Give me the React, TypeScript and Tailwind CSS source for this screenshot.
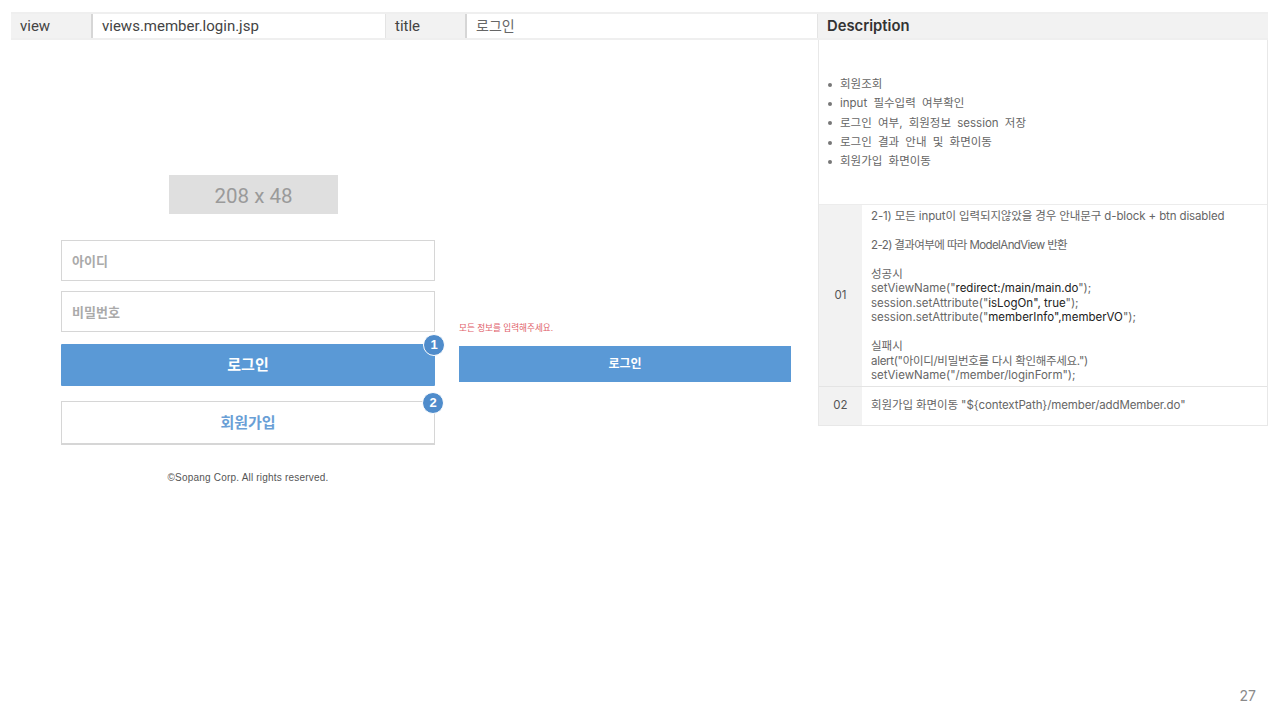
import type { ReactNode } from "react";

const FONT = "font-['Inter','Noto_Sans_CJK_KR',sans-serif]";

function Badge({ n }: { n: number }) {
  return (
    <span className="absolute -right-[10px] -top-[10px] flex h-[22px] w-[22px] items-center justify-center rounded-full border border-white bg-[#4f8ccb] text-[13px] font-bold text-white">
      {n}
    </span>
  );
}

function MetaCell({ label, value, labelW, valueW }: { label: string; value: ReactNode; labelW: string; valueW: string }) {
  return (
    <>
      <div className={`flex h-full items-center border-r-2 border-[#d6d6d6] bg-[#f2f2f2] pl-[9px] font-['Roboto','Noto_Sans_CJK_KR',sans-serif] text-[15px] text-[#444] ${labelW}`}>
        {label}
      </div>
      <div className={`flex h-full items-center border-r border-[#e4e4e4] pl-[9px] font-['Roboto','Noto_Sans_CJK_KR',sans-serif] text-[15px] text-[#444] ${valueW}`}>
        {value}
      </div>
    </>
  );
}

export default function App() {
  return (
    <div className={`${FONT} relative flex h-[720px] w-[1280px] items-start overflow-hidden bg-white pl-[11px] pt-[12px]`}>
      {/* left: meta row + screens */}
      <div className="w-[807px]">
        <div className="flex h-[28px] items-center border-y-2 border-[#efefef]">
          <MetaCell label="view" value="views.member.login.jsp" labelW="w-[82px]" valueW="w-[293px]" />
          <MetaCell label="title" value={<span className="text-[14px] text-[#666]">로그인</span>} labelW="w-[81px]" valueW="w-[351px]" />
        </div>

        <div className="flex pl-[50px]">
          {/* login form */}
          <div className="w-[374px] pt-[135px] font-['Liberation_Sans','Noto_Sans_CJK_KR',sans-serif]">
            <div className="ml-[108px] flex h-[39px] w-[169px] items-center justify-center bg-[#dfdfdf] pt-[3px] font-['Roboto',sans-serif] text-[20.5px] text-[#9a9a9a]">
              208 x 48
            </div>
            <div className="mt-[26px] flex h-[41px] items-center border border-[#d6d6d6] pl-[10px] pt-[3px] text-[13px] font-bold text-[#aaa]">
              아이디
            </div>
            <div className="mt-[10px] flex h-[41px] items-center border border-[#d6d6d6] pl-[10px] pt-[3px] text-[13px] font-bold text-[#aaa]">
              비밀번호
            </div>
            <div className="relative mt-[12px] flex h-[42px] items-center justify-center rounded-[1px] bg-[#5a99d6] text-[15px] font-bold text-white">
              로그인
              <Badge n={1} />
            </div>
            <div className="relative mt-[15px] flex h-[44px] items-center justify-center border border-b-2 border-[#d6d6d6] pt-[2px] text-[15px] font-bold text-[#6a9fd6]">
              회원가입
              <Badge n={2} />
            </div>
            <p className="mt-[27px] text-center text-[10px] leading-[12px] tracking-[0.2px] text-[#555]">
              ©Sopang Corp. All rights reserved.
            </p>
          </div>

          {/* error state */}
          <div className="ml-[24px] w-[332px] pt-[283px] font-['Liberation_Sans','Noto_Sans_CJK_KR',sans-serif]">
            <p className="text-[8.6px] leading-[10px] text-[#e0606a]">모든 정보를 입력해주세요.</p>
            <div className="mt-[13px] flex h-[36px] items-center justify-center bg-[#5a99d6] text-[12px] font-bold text-white">
              로그인
            </div>
          </div>
        </div>
      </div>

      {/* right: description */}
      <div className="w-[450px]">
        <div className="flex h-[28px] items-center border-y-2 border-[#efefef] bg-[#f2f2f2] pl-[9px] text-[14.8px] font-semibold text-[#333]">
          Description
        </div>
        <div className="border-x border-b border-[#e8e8e8]">
          <ul className="h-[165px] border-b border-[#ececec] pl-[9px] pt-[35px] text-[11.5px] leading-[19.3px] text-[#666] [word-spacing:3px]">
            {[
              "회원조회",
              "input 필수입력 여부확인",
              "로그인 여부, 회원정보 session 저장",
              "로그인 결과 안내 및 화면이동",
              "회원가입 화면이동",
            ].map((item) => (
              <li key={item} className="flex items-center gap-[8px]">
                <span className="h-[4px] w-[4px] rounded-full bg-[#777]" />
                {item}
              </li>
            ))}
          </ul>

          <div className="flex h-[182px] border-b border-[#e4e4e4]">
            <div className="flex w-[43px] items-center justify-center bg-[#f2f2f2] text-[11.5px] text-[#555]">01</div>
            <div className="pl-[9px] pt-[4px] text-[11.5px] leading-[14.4px] text-[#666]">
              <p className="tracking-[-0.12px]">2-1) 모든 input이 입력되지않았을 경우 안내문구 d-block + btn disabled</p>
              <p className="mt-[15px] tracking-[-0.6px]">2-2) 결과여부에 따라 ModelAndView 반환</p>
              <p className="mt-[14px]">성공시</p>
              <p>
                setViewName("<span className="text-[#222]">redirect:/main/main.do</span>");
              </p>
              <p>
                session.setAttribute("<span className="text-[#222]">isLogOn", true</span>");
              </p>
              <p>
                session.setAttribute("<span className="text-[#222]">memberInfo",memberVO</span>");
              </p>
              <p className="mt-[15px]">실패시</p>
              <p className="tracking-[-0.3px]">alert("아이디/비밀번호를 다시 확인해주세요.")</p>
              <p>setViewName("/member/loginForm");</p>
            </div>
          </div>

          <div className="flex h-[38px]">
            <div className="flex w-[43px] items-center justify-center bg-[#f2f2f2] text-[11.5px] text-[#555]">02</div>
            <div className="flex items-center pb-[1px] pl-[9px] text-[11.5px] tracking-[-0.1px] text-[#666]">
              회원가입 화면이동 "{"${contextPath}"}/member/addMember.do"
            </div>
          </div>
        </div>
      </div>

      <span className="absolute bottom-[16px] right-[24px] text-[14px] leading-[17px] text-[#8a8a8a]">27</span>
    </div>
  );
}
